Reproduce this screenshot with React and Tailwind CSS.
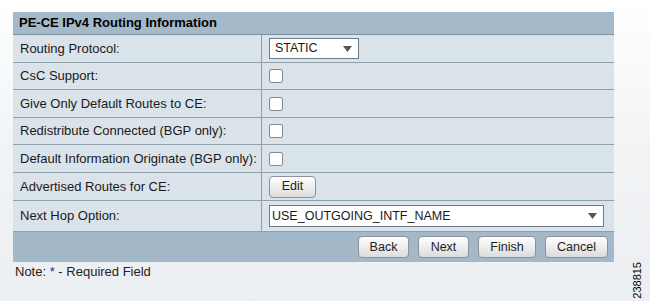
import React from "react";

const rows = [
  { label: "Routing Protocol:", type: "select", h: "h-[28px]" },
  { label: "CsC Support:", type: "check", h: "h-[27px]" },
  { label: "Give Only Default Routes to CE:", type: "check", h: "h-[28px]" },
  { label: "Redistribute Connected (BGP only):", type: "check", h: "h-[27px]" },
  { label: "Default Information Originate (BGP only):", type: "check", h: "h-[28px]" },
  { label: "Advertised Routes for CE:", type: "edit", h: "h-[28px]" },
  { label: "Next Hop Option:", type: "wide", h: "h-[31px]" },
];

function Arrow() {
  return (
    <svg width="9" height="6" viewBox="0 0 9 6">
      <path d="M0 0 H9 L4.5 6 Z" fill="#555" />
    </svg>
  );
}

function Btn({ children, w }) {
  return (
    <button
      className={`h-[22px] ${w} rounded-[4px] border border-[#8c9298] bg-gradient-to-b from-white to-[#dcdcdc] text-[12.5px] text-[#222] shadow-[inset_0_1px_0_#fff]`}
    >
      {children}
    </button>
  );
}

function Field({ type }) {
  if (type === "select")
    return (
      <div className="flex h-[21px] w-[90px] items-center justify-between border border-[#6f7c87] bg-white pl-[5px] pr-[6px] text-[12.5px]">
        <span>STATIC</span>
        <Arrow />
      </div>
    );
  if (type === "check")
    return <div className="h-[14px] w-[14px] rounded-[2px] border border-[#7d8b97] bg-white" />;
  if (type === "edit") return <Btn w="w-[47px]">Edit</Btn>;
  return (
    <div className="flex h-[22px] w-[335px] items-center justify-between border border-[#6f7c87] bg-white pl-[2px] pr-[6px] text-[12.5px]">
      <span>USE_OUTGOING_INTF_NAME</span>
      <Arrow />
    </div>
  );
}

export default function App() {
  return (
    <div
      className="relative h-[301px] w-[650px] overflow-hidden bg-gradient-to-b from-white via-[#f1f3f5] to-[#eceff2]"
      style={{ fontFamily: "'Liberation Sans', Arial, sans-serif" }}
    >
      <div className="pl-[13px] pt-[12px]">
        <div className="w-[601px]">
          <div className="flex h-[23px] items-center border-b border-[#7f8f9c] bg-[#a4b9c9] pl-[6px] text-[13px] font-bold text-black">
            PE-CE IPv4 Routing Information
          </div>
          {rows.map((r, i) => (
            <div
              key={i}
              className={`flex border-b border-[#8fa0ad] bg-[#dae2ea] text-[13px] text-[#1a1a1a] ${r.h}`}
            >
              <div className="flex w-[249px] items-center whitespace-nowrap border-r border-[#8fa0ad] pl-[7px]">
                {r.label}
              </div>
              <div className="flex flex-1 items-center pl-[7px]">
                <Field type={r.type} />
              </div>
            </div>
          ))}
          <div className="flex h-[30px] items-center justify-end gap-[9px] bg-[#a3b8c8] pr-[6px]">
            <Btn w="w-[51px]">Back</Btn>
            <Btn w="w-[51px]">Next</Btn>
            <Btn w="w-[58px]">Finish</Btn>
            <Btn w="w-[63px]">Cancel</Btn>
          </div>
        </div>
        <div className="mt-[3px] pl-[2px] text-[13px] leading-[14px] text-[#222]">
          Note: <span className="text-[#1a2a9a]">*</span> - Required Field
        </div>
      </div>
      <div className="absolute bottom-[2px] left-[631px] rotate-180 text-[11px] leading-[12px] text-black [writing-mode:vertical-rl]">
        238815
      </div>
    </div>
  );
}
